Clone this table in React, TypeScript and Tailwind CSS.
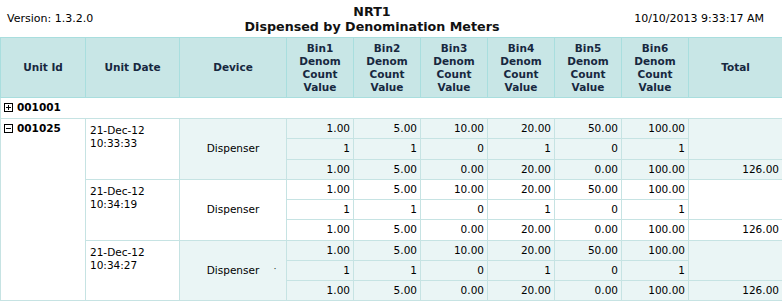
import React from "react";

type Group = {
  date: string;
  time: string;
  shaded: boolean;
};

const groups: Group[] = [
  { date: "21-Dec-12", time: "10:33:33", shaded: true },
  { date: "21-Dec-12", time: "10:34:19", shaded: false },
  { date: "21-Dec-12", time: "10:34:27", shaded: true },
];

const denoms = ["1.00", "5.00", "10.00", "20.00", "50.00", "100.00"];
const counts = ["1", "1", "0", "1", "0", "1"];
const values = ["1.00", "5.00", "0.00", "20.00", "0.00", "100.00"];

function ToggleBox({ open }: { open: boolean }) {
  return (
    <svg width="9" height="9" viewBox="0 0 9 9" className="inline-block mr-[4px] align-[-1px]">
      <rect x="0.5" y="0.5" width="8" height="8" fill="white" stroke="#000" />
      <line x1="2" y1="4.5" x2="7" y2="4.5" stroke="#000" />
      {!open && <line x1="4.5" y1="2" x2="4.5" y2="7" stroke="#000" />}
    </svg>
  );
}

const th =
  "border border-[#a9dede] bg-[#c8e6e6] text-[#17283f] font-bold text-center align-middle leading-[13px] px-1";
const td = "border border-[#c6e3e3] h-[20.25px] py-0 leading-[13px]";

export default function App() {
  return (
    <div
      className="w-[782px] h-[301px] bg-white text-black overflow-hidden"
      style={{ fontFamily: '"DejaVu Sans", Verdana, sans-serif' }}
    >
      {/* report heading */}
      <div className="flex h-[37px] items-center">
        <div className="w-[130px] pl-[7px] text-[11px] pt-[2px]">Version: 1.3.2.0</div>
        <div className="flex-1 text-center font-bold text-[12.7px] leading-[15px] text-[#111]">
          <div>NRT1</div>
          <div>Dispensed by Denomination Meters</div>
        </div>
        <div className="w-[168px] pr-[18px] text-right text-[11px] pt-[2px]">10/10/2013 9:33:17 AM</div>
      </div>

      <table className="w-[782px] table-fixed border-collapse text-[10.5px]">
        <colgroup>
          <col className="w-[85px]" />
          <col className="w-[94px]" />
          <col className="w-[107px]" />
          <col className="w-[67px]" />
          <col className="w-[67px]" />
          <col className="w-[67px]" />
          <col className="w-[67px]" />
          <col className="w-[67px]" />
          <col className="w-[67px]" />
          <col className="w-[94px]" />
        </colgroup>
        <thead>
          <tr className="h-[60px]">
            <th className={th}>Unit Id</th>
            <th className={th}>Unit Date</th>
            <th className={th}>Device</th>
            {[1, 2, 3, 4, 5, 6].map((n) => (
              <th key={n} className={th}>
                Bin{n}
                <br />
                Denom
                <br />
                Count
                <br />
                Value
              </th>
            ))}
            <th className={th}>Total</th>
          </tr>
        </thead>
        <tbody>
          <tr className="h-[21px]">
            <td colSpan={10} className="border border-[#c6e3e3] pl-[3px] font-bold text-[10.5px]">
              <ToggleBox open={false} />
              001001
            </td>
          </tr>
          {groups.map((g, gi) => {
            const fill = g.shaded ? "bg-[#eaf5f5]" : "bg-white";
            return (
              <React.Fragment key={gi}>
                <tr>
                  {gi === 0 && (
                    <td rowSpan={9} className={`${td} bg-white align-top pl-[3px] pt-[3px] font-bold`}>
                      <ToggleBox open={true} />
                      001025
                    </td>
                  )}
                  <td rowSpan={3} className={`${td} bg-white align-top pl-[4px] pt-[5px]`}>
                    {g.date}
                    <br />
                    {g.time}
                  </td>
                  <td rowSpan={3} className={`${td} ${fill} text-center align-middle`}>
                    <span className="relative">
                      Dispenser
                      {gi === 2 && (
                        <span className="absolute left-[67px] top-[-1px] text-[8px]">·</span>
                      )}
                    </span>
                  </td>
                  {denoms.map((d, i) => (
                    <td key={i} className={`${td} ${fill} text-right pr-[3px]`}>
                      {d}
                    </td>
                  ))}
                  <td rowSpan={2} className={`${td} ${fill}`} />
                </tr>
                <tr>
                  {counts.map((c, i) => (
                    <td key={i} className={`${td} ${fill} text-right pr-[3px]`}>
                      {c}
                    </td>
                  ))}
                </tr>
                <tr>
                  {values.map((v, i) => (
                    <td key={i} className={`${td} ${fill} text-right pr-[3px]`}>
                      {v}
                    </td>
                  ))}
                  <td className={`${td} ${fill} text-right pr-[3px]`}>126.00</td>
                </tr>
              </React.Fragment>
            );
          })}
        </tbody>
      </table>
    </div>
  );
}
